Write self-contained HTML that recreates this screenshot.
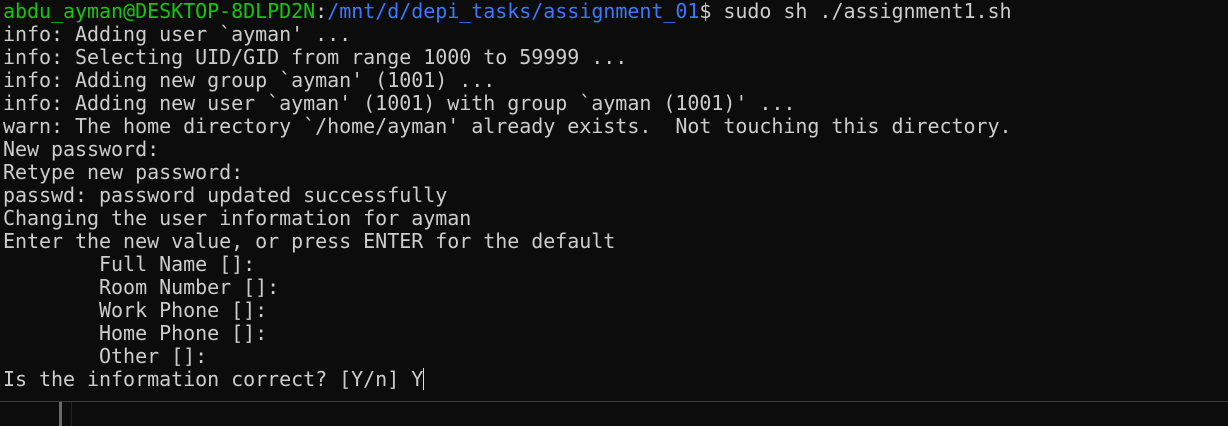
<!DOCTYPE html>
<html><head><meta charset="utf-8"><style>
html,body{margin:0;padding:0;background:#0c0c0c;width:1228px;height:426px;overflow:hidden}
pre{margin:0;position:absolute;left:3px;top:0;font-family:"DejaVu Sans Mono","Liberation Mono",monospace;font-size:20px;letter-spacing:-0.035px;line-height:23px;color:#cccccc;white-space:pre}
.g{color:#16c60c}.b{color:#3b78ff}
.cur{display:inline-block;width:1px;height:22px;background:#ddd;vertical-align:-4px}
.sep{position:absolute;left:0;top:401px;width:1228px;height:1px;background:#3a3a3a}
.bar{position:absolute;left:59px;top:402px;width:3px;height:24px;background:#6a6a6a}
.bar2{position:absolute;left:71px;top:402px;width:1px;height:24px;background:#222}
</style></head><body>
<pre><span class="g">abdu_ayman@DESKTOP-8DLPD2N</span>:<span class="b">/mnt/d/depi_tasks/assignment_01</span>$ sudo sh ./assignment1.sh
info: Adding user `ayman' ...
info: Selecting UID/GID from range 1000 to 59999 ...
info: Adding new group `ayman' (1001) ...
info: Adding new user `ayman' (1001) with group `ayman (1001)' ...
warn: The home directory `/home/ayman' already exists.  Not touching this directory.
New password:
Retype new password:
passwd: password updated successfully
Changing the user information for ayman
Enter the new value, or press ENTER for the default
        Full Name []:
        Room Number []:
        Work Phone []:
        Home Phone []:
        Other []:
Is the information correct? [Y/n] Y<span class="cur"></span></pre>
<div class="sep"></div><div class="bar"></div><div class="bar2"></div>
</body></html>
